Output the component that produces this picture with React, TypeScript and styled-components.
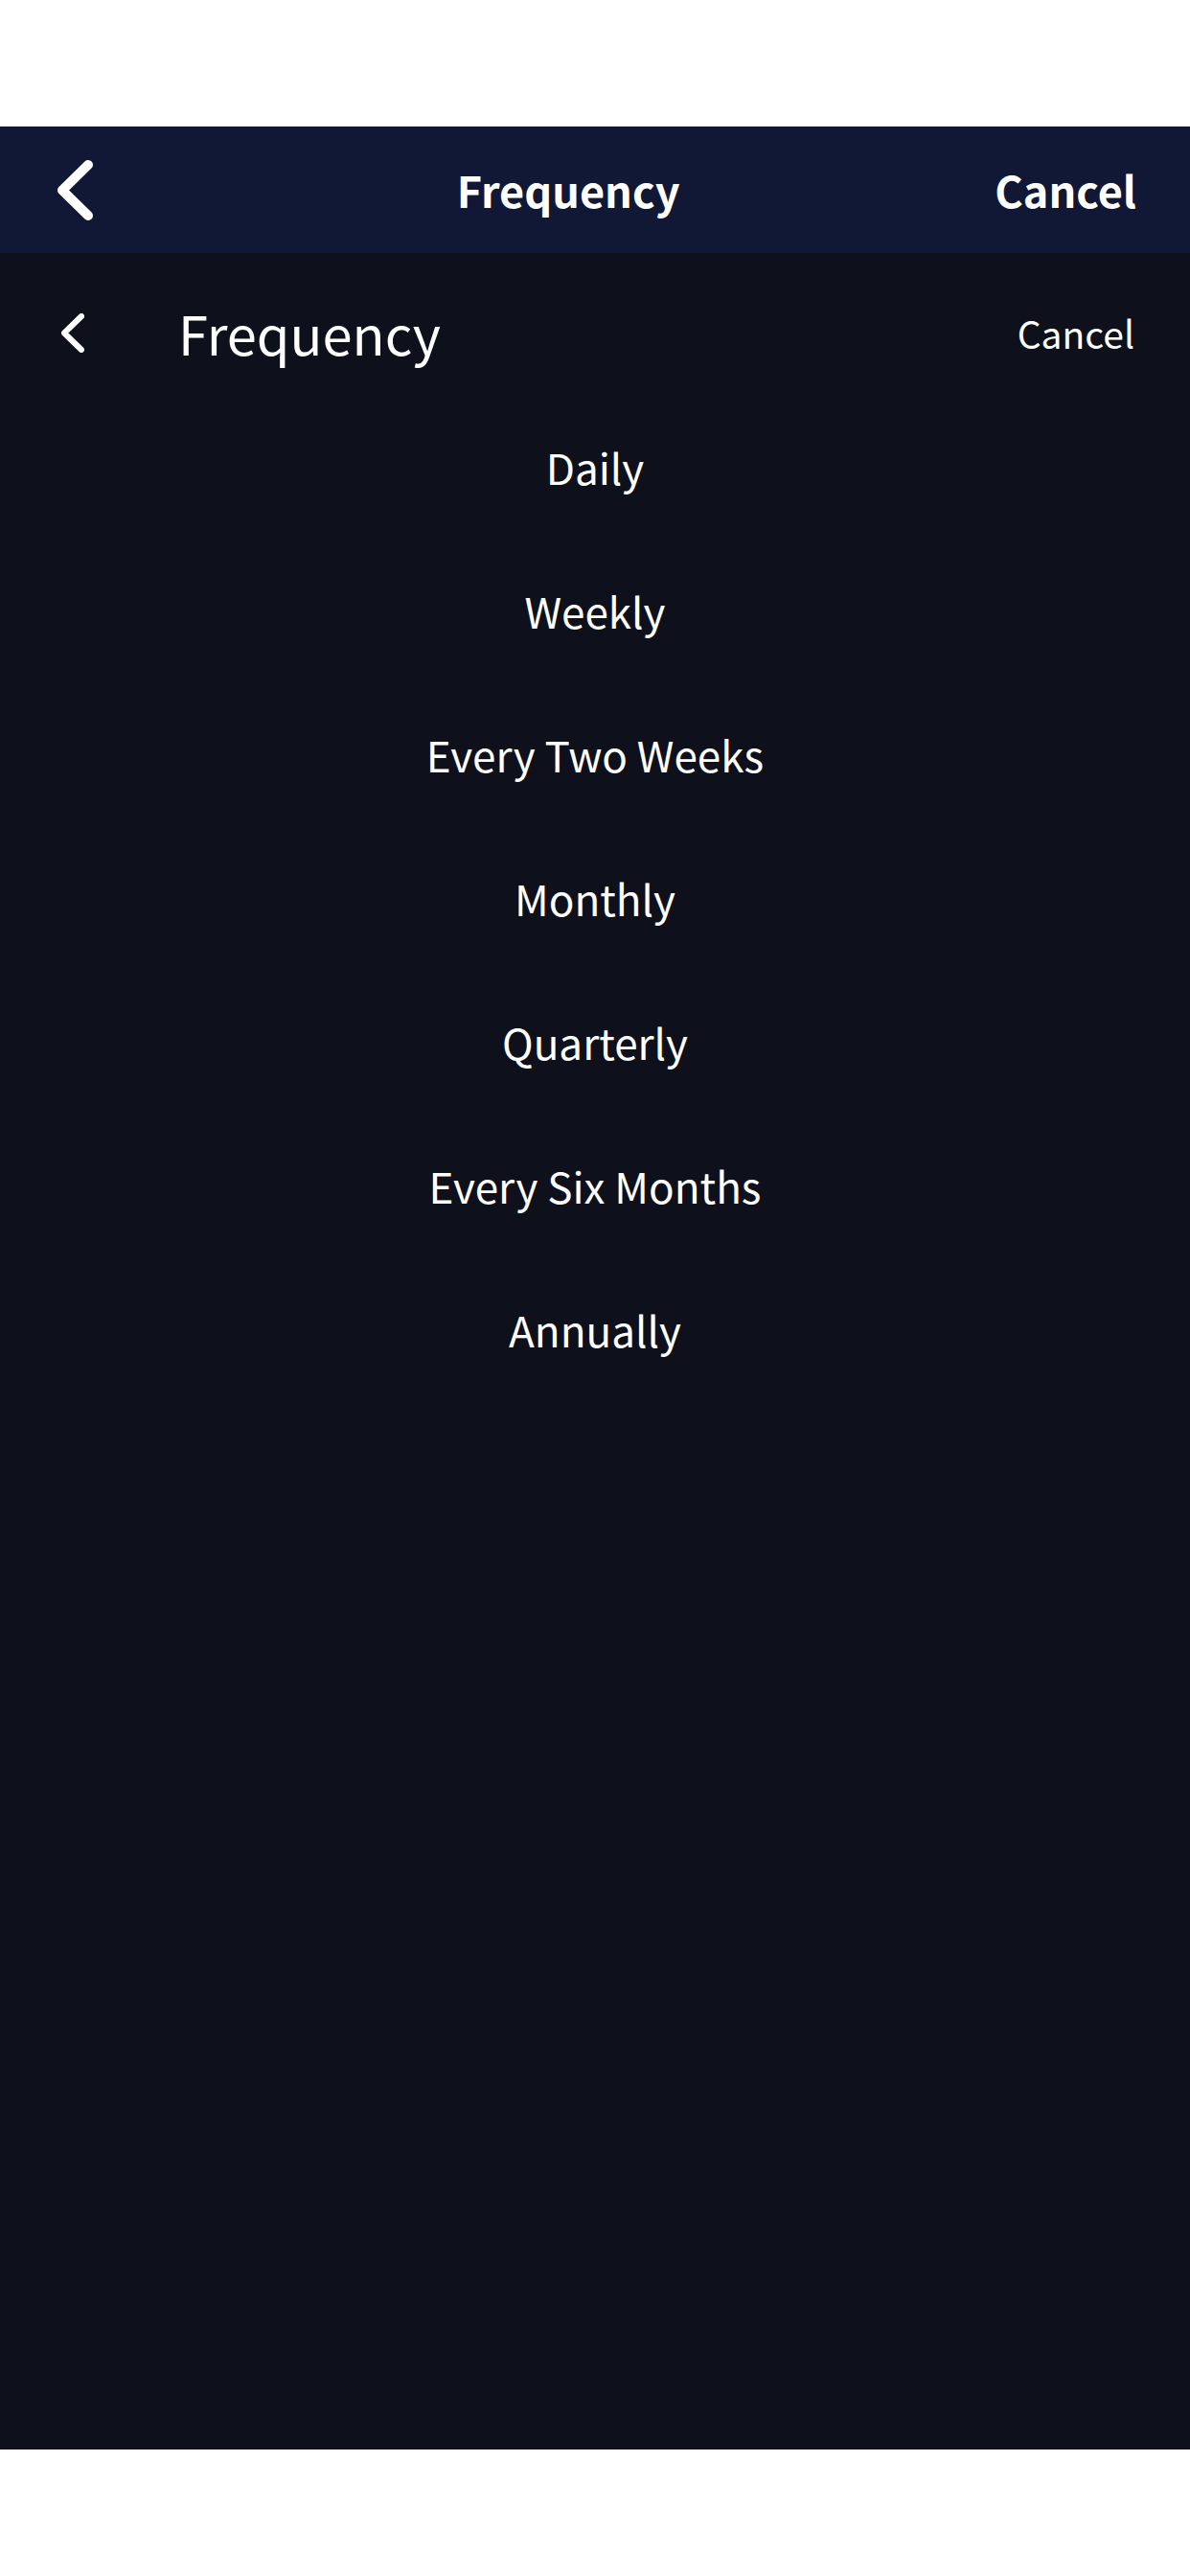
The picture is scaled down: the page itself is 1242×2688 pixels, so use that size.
import React from 'react';
import styled, { createGlobalStyle } from 'styled-components';

const GlobalStyle = createGlobalStyle`
  * { box-sizing: border-box; }
  body { margin: 0; background: #ffffff; }
`;

const Screen = styled.div`
  display: flex;
  flex-direction: column;
  min-height: 100vh;
  padding: 132px 0;
  color: #ffffff;
  font-family: 'Noto Sans CJK SC', 'Noto Sans', sans-serif;
`;

const NavBar = styled.header`
  display: flex;
  align-items: center;
  justify-content: space-between;
  height: 132px;
  padding: 0 56px 0 60px;
  background: #111835;
`;

const NavTitle = styled.h1`
  margin: 0;
  font-size: 45px;
  font-weight: 700;
  line-height: 64px;
`;

const PlainButton = styled.button`
  display: flex;
  align-items: center;
  padding: 0;
  border: 0;
  background: none;
  color: inherit;
  font-family: inherit;
  cursor: pointer;
`;

const NavBack = styled(PlainButton)`
  width: 88px;
`;

const NavCancel = styled(PlainButton)`
  font-size: 45px;
  font-weight: 700;
  line-height: 64px;
`;

const Panel = styled.main`
  display: flex;
  flex: 1;
  flex-direction: column;
  background: #0e101b;
`;

const PanelHeader = styled.div`
  display: flex;
  align-items: center;
  height: 148px;
  padding: 18px 58px 0 64px;
`;

const PanelBack = styled(PlainButton)`
  width: 122px;
`;

const PanelTitle = styled.h2`
  flex: 1;
  margin: 0;
  font-size: 56px;
  font-weight: 400;
  line-height: 80px;
`;

const PanelCancel = styled(PlainButton)`
  font-size: 39px;
  line-height: 56px;
`;

const Options = styled.ul`
  margin: 0;
  padding: 0;
  list-style: none;
`;

const Option = styled(PlainButton)`
  justify-content: center;
  width: 100%;
  height: 150px;
  font-size: 44px;
  line-height: 64px;
`;

function Chevron({ width, height, stroke }: { width: number; height: number; stroke: number }) {
  const inset = stroke / 2;
  return (
    <svg width={width} height={height} fill="none" aria-hidden="true">
      <path
        d={`M${width - inset} ${inset}L${inset} ${height / 2}L${width - inset} ${height - inset}`}
        stroke="currentColor"
        strokeWidth={stroke}
        strokeLinecap="round"
        strokeLinejoin="round"
      />
    </svg>
  );
}

const frequencies = [
  'Daily',
  'Weekly',
  'Every Two Weeks',
  'Monthly',
  'Quarterly',
  'Every Six Months',
  'Annually',
];

export default function App() {
  return (
    <>
      <GlobalStyle />
      <Screen>
        <NavBar>
          <NavBack type="button" aria-label="Back">
            <Chevron width={37} height={63} stroke={10} />
          </NavBack>
          <NavTitle>Frequency</NavTitle>
          <NavCancel type="button">Cancel</NavCancel>
        </NavBar>
        <Panel>
          <PanelHeader>
            <PanelBack type="button" aria-label="Back">
              <Chevron width={24} height={41} stroke={6} />
            </PanelBack>
            <PanelTitle>Frequency</PanelTitle>
            <PanelCancel type="button">Cancel</PanelCancel>
          </PanelHeader>
          <Options>
            {frequencies.map((label) => (
              <li key={label}>
                <Option type="button">{label}</Option>
              </li>
            ))}
          </Options>
        </Panel>
      </Screen>
    </>
  );
}
